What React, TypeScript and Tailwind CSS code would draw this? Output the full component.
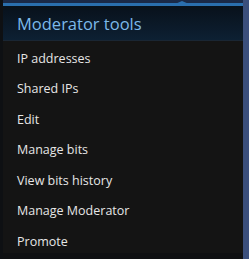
import React from "react";

const items = [
  "IP addresses",
  "Shared IPs",
  "Edit",
  "Manage bits",
  "View bits history",
  "Manage Moderator",
  "Promote",
];

export default function App() {
  return (
    <div
      className="relative w-[249px] h-[259px] overflow-hidden bg-[#0d1118] flex"
      style={{ fontFamily: '"Open Sans", "Noto Sans", sans-serif' }}
    >
      <div className="w-[3px] shrink-0 bg-[#0e1013]" />
      <div className="w-[240px] shrink-0 flex flex-col">
        <div className="h-[3px] bg-[#1a2a48]" />
        <div className="relative h-[38px] border-t-[3px] border-[#2a6fae] bg-gradient-to-b from-[#08111b] to-[#0d2033] border-b border-b-[#1a2633] flex items-center px-[14px]">
          <div className="absolute -top-[5px] left-[172px] w-0 h-0 border-l-[7px] border-r-[7px] border-b-[3px] border-l-transparent border-r-transparent border-b-[#2a6fae]" />
          <span className="text-[16.5px] leading-none text-[#7cb9ea] mt-[3px]">Moderator tools</span>
        </div>
        <div className="h-[212px] bg-[#141414] flex flex-col pt-[3px]">
          {items.map((t) => (
            <div key={t} className="h-[30.5px] shrink-0 flex items-center px-[14px] text-[12.5px] text-[#e6e6e6]">
              {t}
            </div>
          ))}
        </div>
        <div className="flex-1 bg-[#0f1012]" />
      </div>
      <div className="flex-1 bg-[#3b4f7c]" />
    </div>
  );
}
